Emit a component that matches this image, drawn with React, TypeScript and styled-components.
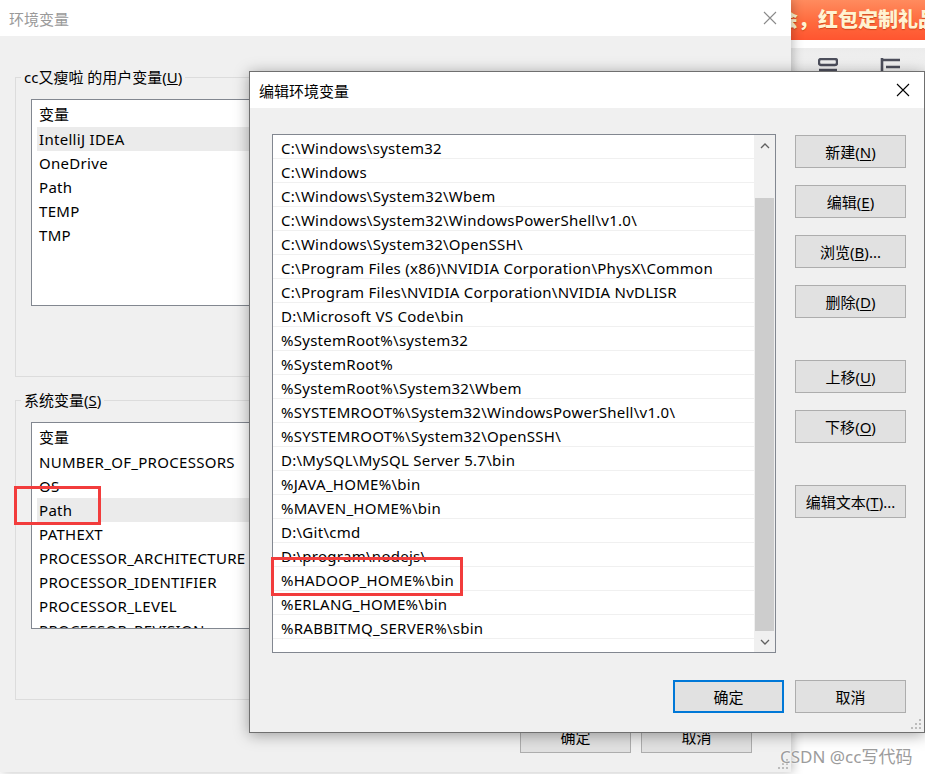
import React from 'react';
import styled, { createGlobalStyle } from 'styled-components';

const GlobalStyle = createGlobalStyle`
  html, body {
    margin: 0;
    padding: 0;
  }
  body {
    background: #ffffff;
    font-family: "Noto Sans", "Noto Sans CJK SC", sans-serif;
    font-size: 15px;
    color: #000;
  }
`;

const userVars = ['IntelliJ IDEA', 'OneDrive', 'Path', 'TEMP', 'TMP'];
const systemVars = [
  'NUMBER_OF_PROCESSORS',
  'OS',
  'Path',
  'PATHEXT',
  'PROCESSOR_ARCHITECTURE',
  'PROCESSOR_IDENTIFIER',
  'PROCESSOR_LEVEL',
  'PROCESSOR_REVISION',
];

const paths = [
  'C:\\Windows\\system32',
  'C:\\Windows',
  'C:\\Windows\\System32\\Wbem',
  'C:\\Windows\\System32\\WindowsPowerShell\\v1.0\\',
  'C:\\Windows\\System32\\OpenSSH\\',
  'C:\\Program Files (x86)\\NVIDIA Corporation\\PhysX\\Common',
  'C:\\Program Files\\NVIDIA Corporation\\NVIDIA NvDLISR',
  'D:\\Microsoft VS Code\\bin',
  '%SystemRoot%\\system32',
  '%SystemRoot%',
  '%SystemRoot%\\System32\\Wbem',
  '%SYSTEMROOT%\\System32\\WindowsPowerShell\\v1.0\\',
  '%SYSTEMROOT%\\System32\\OpenSSH\\',
  'D:\\MySQL\\MySQL Server 5.7\\bin',
  '%JAVA_HOME%\\bin',
  '%MAVEN_HOME%\\bin',
  'D:\\Git\\cmd',
  'D:\\program\\nodejs\\',
  '%HADOOP_HOME%\\bin',
  '%ERLANG_HOME%\\bin',
  '%RABBITMQ_SERVER%\\sbin',
  '',
];

const CloseIcon: React.FC<{ color: string }> = ({ color }) => (
  <svg width="14" height="14" viewBox="0 0 14 14">
    <path d="M1 1 L13 13 M13 1 L1 13" stroke={color} strokeWidth="1.1" fill="none" />
  </svg>
);

const Chevron: React.FC<{ down?: boolean }> = ({ down }) => (
  <svg width="10" height="6" viewBox="0 0 10 6">
    <path
      d={down ? 'M1 1 L5 5 L9 1' : 'M1 5 L5 1 L9 5'}
      stroke="#606060"
      strokeWidth="1.3"
      fill="none"
    />
  </svg>
);

const GripIcon = () => (
  <svg width="10" height="10" viewBox="0 0 10 10">
    {[
      [8, 0],
      [8, 4],
      [4, 4],
      [8, 8],
      [4, 8],
      [0, 8],
    ].map(([x, y]) => (
      <rect key={`${x}-${y}`} x={x} y={y} width="2" height="2" fill="#bcbcbc" />
    ))}
  </svg>
);

const Btn: React.FC<{ label: string; hotkey?: string; tail?: string; primary?: boolean; top?: number }> = ({
  label,
  hotkey,
  tail,
  primary,
  top,
}) => (
  <Button $primary={primary} $top={top}>
    {label}
    {hotkey && (
      <>
        (<u>{hotkey}</u>)
      </>
    )}
    {tail}
  </Button>
);

const VarList: React.FC<{ items: string[]; selected: number }> = ({ items, selected }) => (
  <ListBox>
    <ListHeader>变量</ListHeader>
    {items.map((name, i) => (
      <VarRow key={name + i} $selected={i === selected}>
        {name}
      </VarRow>
    ))}
  </ListBox>
);

const App: React.FC = () => {
  return (
    <>
      <GlobalStyle />
      <Page>
        <WebPage>
          <Banner>会，红包定制礼品</Banner>
          <Toolbar>
            <svg width="20" height="16" viewBox="0 0 20 16">
              <rect x="1" y="1" width="18" height="6" rx="2" fill="none" stroke="#4d4f5c" strokeWidth="2.4" />
              <path d="M1 12 H19" stroke="#4d4f5c" strokeWidth="2.4" />
            </svg>
            <svg width="22" height="16" viewBox="0 0 22 16">
              <path d="M2 0 V16 M2 2 H20 M6 9 H20" stroke="#4d4f5c" strokeWidth="2.6" fill="none" />
            </svg>
          </Toolbar>
        </WebPage>

        <BgWindow>
          <TitleBar>
            <TitleText $dim>环境变量</TitleText>
            <CloseBox>
              <CloseIcon color="#8a8a8a" />
            </CloseBox>
          </TitleBar>
          <BgBody>
            <Group>
              <Legend>
                cc又瘦啦 的用户变量(<u>U</u>)
              </Legend>
              <VarList items={userVars} selected={0} />
            </Group>
            <Group $gap={23}>
              <Legend>
                系统变量(<u>S</u>)
              </Legend>
              <VarList items={systemVars} selected={2} />
            </Group>
            <BgFooter>
              <Btn label="确定" />
              <Btn label="取消" />
            </BgFooter>
          </BgBody>
          <Grip>
            <GripIcon />
          </Grip>
        </BgWindow>

        <Dialog>
          <TitleBar>
            <TitleText>编辑环境变量</TitleText>
            <CloseBox>
              <CloseIcon color="#000" />
            </CloseBox>
          </TitleBar>
          <DialogBody>
            <Main>
              <PathList>
                <PathRows>
                  {paths.map((p, i) => (
                    <PathRow key={i}>{p}</PathRow>
                  ))}
                </PathRows>
                <ScrollBar>
                  <ScrollArrow>
                    <Chevron />
                  </ScrollArrow>
                  <ScrollTrack />
                  <ScrollThumb />
                  <ScrollArrow>
                    <Chevron down />
                  </ScrollArrow>
                </ScrollBar>
              </PathList>
              <ButtonColumn>
                <Btn label="新建" hotkey="N" top={1} />
                <Btn label="编辑" hotkey="E" top={17} />
                <Btn label="浏览" hotkey="B" tail="..." top={17} />
                <Btn label="删除" hotkey="D" top={17} />
                <Btn label="上移" hotkey="U" top={42} />
                <Btn label="下移" hotkey="O" top={17} />
                <Btn label="编辑文本" hotkey="T" tail="..." top={42} />
              </ButtonColumn>
            </Main>
            <Footer>
              <Btn label="确定" primary />
              <Btn label="取消" />
            </Footer>
          </DialogBody>
          <Grip>
            <GripIcon />
          </Grip>
        </Dialog>

        <Mark $x={14} $y={486} $w={87} $h={39} />
        <Mark $x={271} $y={557} $w={192} $h={39} />
        <Watermark>CSDN @cc写代码</Watermark>
      </Page>
    </>
  );
};

export default App;

const Page = styled.div`
  position: relative;
  width: 925px;
  height: 774px;
  overflow: hidden;
  background: #ffffff;
`;

const WebPage = styled.div`
  display: flex;
  flex-direction: column;
`;

const Banner = styled.div`
  height: 40px;
  padding-left: 778px;
  background: linear-gradient(180deg, #ff8b5e 0%, #ff6a3d 55%, #ff5530 100%);
  color: #fff3d2;
  font-family: "Noto Sans CJK SC", sans-serif;
  font-weight: 900;
  font-size: 20px;
  line-height: 38px;
  white-space: nowrap;
  text-shadow: 0 1px 1px rgba(160, 40, 0, 0.5);
`;

const Toolbar = styled.div`
  height: 34px;
  margin-top: 8px;
  display: flex;
  align-items: flex-start;
  gap: 42px;
  padding: 10px 0 0 818px;
  box-sizing: border-box;
  background: linear-gradient(180deg, #ececec 0%, #f6f6f6 100%);
`;

const BgWindow = styled.div`
  position: absolute;
  left: 0;
  top: 0;
  width: 791px;
  height: 772px;
  background: #f0f0f0;
  box-shadow: 2px 0 10px rgba(0, 0, 0, 0.25);
  display: flex;
  flex-direction: column;
`;

const TitleBar = styled.div`
  height: 36px;
  flex: none;
  background: #ffffff;
  display: flex;
  align-items: center;
  justify-content: space-between;
`;

const TitleText = styled.span<{ $dim?: boolean }>`
  padding-left: 9px;
  color: ${p => (p.$dim ? '#9a9a9a' : '#000')};
  font-size: 15px;
`;

const CloseBox = styled.div`
  width: 42px;
  height: 36px;
  display: flex;
  align-items: center;
  justify-content: center;
`;

const BgBody = styled.div`
  flex: 1;
  padding: 0 15px;
  display: flex;
  flex-direction: column;
`;

const Group = styled.div<{ $gap?: number }>`
  margin-top: ${p => p.$gap ?? 41}px;
  height: 300px;
  box-sizing: border-box;
  border: 1px solid #dcdcdc;
  display: flex;
  flex-direction: column;
`;

const Legend = styled.div`
  align-self: flex-start;
  margin: -11px 0 0 5px;
  padding: 0 3px;
  height: 20px;
  line-height: 20px;
  background: #f0f0f0;
  white-space: nowrap;
`;

const ListBox = styled.div`
  margin: 12px 15px 0 15px;
  height: 207px;
  box-sizing: border-box;
  border: 1px solid #828790;
  background: #ffffff;
  overflow: hidden;
`;

const ListHeader = styled.div`
  height: 27px;
  line-height: 28px;
  padding-left: 7px;
`;

const VarRow = styled.div<{ $selected?: boolean }>`
  height: 24px;
  line-height: 24px;
  margin-left: 5px;
  padding-left: 2px;
  letter-spacing: 0.3px;
  white-space: nowrap;
  background: ${p => (p.$selected ? '#ebebeb' : 'transparent')};
`;

const BgFooter = styled.div`
  margin-top: 20px;
  padding-right: 24px;
  display: flex;
  justify-content: flex-end;
  gap: 10px;
`;

const Button = styled.div<{ $primary?: boolean; $top?: number }>`
  width: 111px;
  height: 33px;
  flex: none;
  box-sizing: border-box;
  margin-top: ${p => p.$top ?? 0}px;
  border: ${p => (p.$primary ? '2px solid #0078d7' : '1px solid #adadad')};
  background: #e1e1e1;
  display: flex;
  align-items: center;
  justify-content: center;
  white-space: nowrap;
  font-size: 15px;
  u {
    text-underline-offset: 2px;
  }
`;

const Grip = styled.div`
  position: absolute;
  right: 3px;
  bottom: 3px;
  line-height: 0;
`;

const Dialog = styled.div`
  position: absolute;
  left: 249px;
  top: 71px;
  width: 676px;
  height: 662px;
  box-sizing: border-box;
  border: 1px solid #6f6f6f;
  background: #f0f0f0;
  box-shadow: 0 2px 14px rgba(0, 0, 0, 0.35);
  display: flex;
  flex-direction: column;
`;

const DialogBody = styled.div`
  flex: 1;
  padding: 26px 18px 0 22px;
  display: flex;
  flex-direction: column;
`;

const Main = styled.div`
  display: flex;
  gap: 19px;
`;

const PathList = styled.div`
  width: 504px;
  height: 519px;
  box-sizing: border-box;
  border: 1px solid #828790;
  background: #ffffff;
  display: flex;
`;

const PathRows = styled.div`
  flex: 1;
  overflow: hidden;
`;

const PathRow = styled.div`
  height: 24px;
  box-sizing: border-box;
  border-bottom: 1px solid #f0f0f0;
  padding: 2px 0 0 8px;
  line-height: 23px;
  letter-spacing: 0.27px;
  white-space: nowrap;
`;

const ScrollBar = styled.div`
  width: 21px;
  background: #f0f0f0;
  display: flex;
  flex-direction: column;
`;

const ScrollArrow = styled.div`
  height: 21px;
  display: flex;
  align-items: center;
  justify-content: center;
`;

const ScrollTrack = styled.div`
  height: 42px;
`;

const ScrollThumb = styled.div`
  height: 433px;
  margin: 0 1px;
  background: #cdcdcd;
`;

const ButtonColumn = styled.div`
  display: flex;
  flex-direction: column;
`;

const Footer = styled.div`
  margin-top: 27px;
  display: flex;
  justify-content: flex-end;
  gap: 11px;
`;

const Mark = styled.div<{ $x: number; $y: number; $w: number; $h: number }>`
  position: absolute;
  left: ${p => p.$x}px;
  top: ${p => p.$y}px;
  width: ${p => p.$w}px;
  height: ${p => p.$h}px;
  box-sizing: border-box;
  border: 3px solid #f23c3c;
`;

const Watermark = styled.div`
  position: absolute;
  left: 780px;
  top: 743px;
  font-size: 17px;
  color: #9c9c9c;
  white-space: nowrap;
  text-shadow: 0 0 2px #fff, 0 0 2px #fff;
`;
